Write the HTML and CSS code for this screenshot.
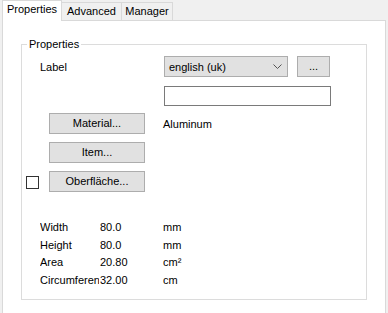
FILE: index.html
```html
<!DOCTYPE html>
<html>

<head>
    <title>Properties</title>
    <meta http-equiv="Content-Type" content="text/html; charset=UTF-8">
    <link rel="stylesheet" href="styles.css">
</head>

<body>
    <div class='tabs'>
        <div class='tab active'>Properties</div>
        <div class='tab'>Advanced</div>
        <div class='tab tab-last'>Manager</div>
    </div>
    <div class='panel'>
        <fieldset class='group'>
            <legend>Properties</legend>
            <div class='row row-label'>
                <span class='label'>Label</span>
                <div class='select'>
                    <span>english (uk)</span>
                    <svg width='9' height='6' viewBox='0 0 9 6'>
                        <path d='M0.5 0.5 L4.5 4.5 L8.5 0.5' fill='none' stroke='#555' stroke-width='1'/>
                    </svg>
                </div>
                <div class='btn btn-dots'>...</div>
            </div>
            <div class='row row-input'>
                <div class='input'></div>
            </div>
            <div class='row row-btn'>
                <div class='btn btn-wide'>Material...</div>
                <span class='value'>Aluminum</span>
            </div>
            <div class='row row-btn'>
                <div class='btn btn-wide'>Item...</div>
            </div>
            <div class='row row-btn row-check'>
                <div class='check'></div>
                <div class='btn btn-wide'>Oberfläche...</div>
            </div>
            <div class='table'>
                <div class='trow'><span class='c1'>Width</span><span class='c2'>80.0</span><span>mm</span></div>
                <div class='trow'><span class='c1'>Height</span><span class='c2'>80.0</span><span>mm</span></div>
                <div class='trow'><span class='c1'>Area</span><span class='c2'>20.80</span><span>cm²</span></div>
                <div class='trow'><span class='c1'>Circumference</span><span class='c2'>32.00</span><span>cm</span></div>
            </div>
        </fieldset>
    </div>
</body>

</html>
```

FILE: styles.css
```css
html,
body
{
    margin: 0;
    width: 100%;
    height: 100%;
    font-family: "Liberation Sans", Arial, sans-serif;
    font-size: 11px;
}

body
{
    color: #000;
    overflow: hidden;
    background-color: #f0f0f0;
}

.tabs
{
    display: flex;
    align-items: flex-start;
    height: 21px;
    margin-bottom: -1px;
    padding-left: 2px;
    position: relative;
    z-index: 1;
}

.tab
{
    box-sizing: border-box;
    margin-top: 2px;
    width: 60px;
    height: 18px;
    line-height: 17px;
    text-align: center;
    border: 1px solid #d9d9d9;
    border-left: none;
    border-bottom: none;
    background-color: #f0f0f0;
}

.tab.active
{
    margin-top: 0;
    height: 21px;
    line-height: 16px;
    border-left: 1px solid #d9d9d9;
    background-color: #fff;
}

.tab.tab-last
{
    width: 51px;
}

.panel
{
    box-sizing: border-box;
    margin-left: 2px;
    width: 384px;
    height: 293px;
    background-color: #fff;
    border: 1px solid #d9d9d9;
    border-bottom: none;
    padding-top: 16px;
}

.group
{
    margin: 0 18px;
    padding: 5px 0 0 0;
    height: 263px;
    box-sizing: border-box;
    border: 1px solid #dcdcdc;
}

.group legend
{
    margin-left: 5px;
    padding: 0 2px;
    line-height: 14px;
}

.row
{
    display: flex;
    align-items: center;
}

.row-label
{
    padding-left: 18px;
    height: 21px;
}

.label
{
    width: 124px;
}

.select
{
    box-sizing: border-box;
    width: 124px;
    height: 21px;
    padding: 0 5px 0 4px;
    display: flex;
    align-items: center;
    justify-content: space-between;
    background-color: #e1e1e1;
    border: 1px solid #adadad;
}

.btn
{
    box-sizing: border-box;
    height: 21px;
    line-height: 19px;
    text-align: center;
    background-color: #e1e1e1;
    border: 1px solid #adadad;
}

.btn-dots
{
    width: 33px;
    margin-left: 9px;
}

.row-input
{
    padding-left: 142px;
    margin-top: 9px;
}

.input
{
    box-sizing: border-box;
    width: 167px;
    height: 20px;
    border: 1px solid #7a7a7a;
}

.row-btn
{
    padding-left: 27px;
    margin-top: 8px;
}

.row-input + .row-btn
{
    margin-top: 7px;
}

.btn-wide
{
    width: 96px;
}

.value
{
    margin-left: 18px;
}

.row-check
{
    padding-left: 4px;
}

.check
{
    box-sizing: border-box;
    width: 13px;
    height: 13px;
    margin-right: 10px;
    margin-top: 1px;
    border: 1px solid #333;
}

.table
{
    margin-top: 27px;
    padding-left: 18px;
}

.trow
{
    display: flex;
    height: 17.5px;
    line-height: 17px;
}

.trow .c1
{
    width: 59px;
    margin-right: 1px;
    overflow: hidden;
    white-space: nowrap;
}

.trow .c2
{
    width: 63px;
}
```
